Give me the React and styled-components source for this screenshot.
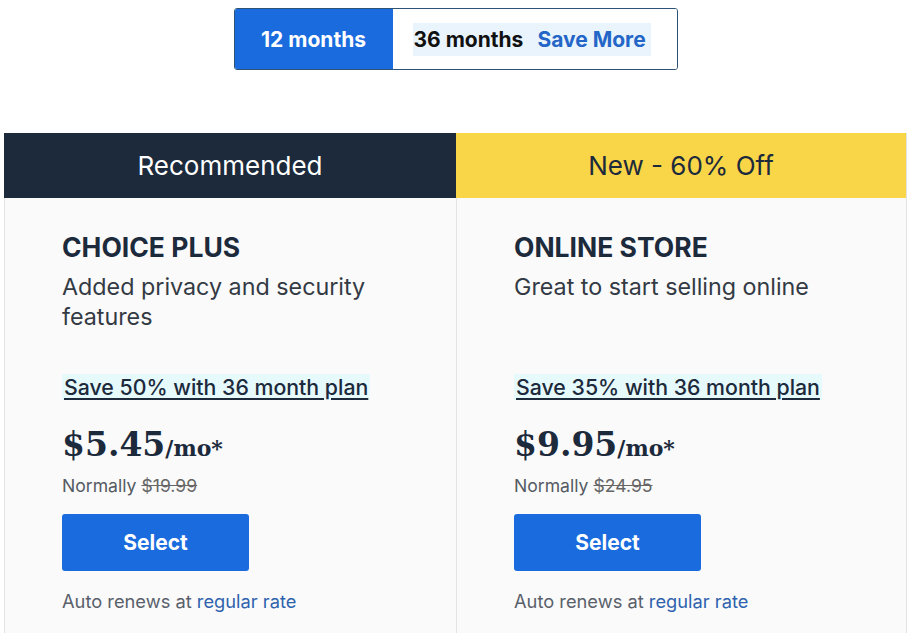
import React from 'react';
import styled, { createGlobalStyle } from 'styled-components';

const GlobalStyle = createGlobalStyle`
  body {
    margin: 0;
    background: #ffffff;
    font-family: Inter, "Noto Sans", sans-serif;
    color: #1c2a3c;
  }
`;

const Page = styled.div`
  width: 903px;
  padding: 8px 0 0 4px;
`;

const ToggleRow = styled.div`
  display: flex;
  justify-content: center;
  margin-bottom: 63px;
`;

const Toggle = styled.div`
  display: flex;
  height: 62px;
  border: 1px solid #2d5478;
  border-radius: 3px;
  overflow: hidden;
  box-sizing: border-box;
`;

const TermButton = styled.button`
  border: none;
  margin: 0;
  font-family: inherit;
  font-size: 21px;
  font-weight: 700;
  white-space: nowrap;
  display: flex;
  align-items: center;
  padding: 0 ${p => (p.$active ? '0' : '20px')};
  background: ${p => (p.$active ? '#196bde' : '#ffffff')};
  color: ${p => (p.$active ? '#ffffff' : '#111111')};
  width: ${p => (p.$active ? '158px' : '284px')};
  justify-content: ${p => (p.$active ? 'center' : 'flex-start')};
  cursor: pointer;
`;

const Highlight = styled.span`
  display: flex;
  flex-shrink: 0;
  align-items: center;
  gap: 14px;
  white-space: nowrap;
  background: #eaf4fd;
  padding: 4px 5px 4px 1px;
`;

const SaveMore = styled.span`
  color: #2466c8;
`;

const Cards = styled.div`
  display: grid;
  grid-template-columns: 452px 451px;
`;

const Card = styled.div`
  background: #fafafa;
  border-left: 1px solid #e3e3e3;
  border-right: ${p => (p.$last ? '1px solid #e3e3e3' : 'none')};
  min-height: 500px;
`;

const Banner = styled.div`
  height: 65px;
  display: flex;
  align-items: center;
  justify-content: center;
  font-size: 26px;
  font-weight: 400;
  background: ${p => p.$bg};
  color: ${p => p.$fg};
  margin-left: -1px;
`;

const Body = styled.div`
  padding: 34px 30px 0 57px;
`;

const PlanName = styled.h2`
  margin: 0;
  font-size: 26.5px;
  font-weight: 700;
  line-height: 30px;
  color: #1c2a3c;
`;

const Tagline = styled.p`
  margin: 10px 0 0;
  font-size: 23.3px;
  line-height: 29.5px;
  color: #333a44;
  min-height: 60px;
`;

const SaveLink = styled.a`
  display: block;
  width: fit-content;
  margin-top: 42px;
  padding: 2px 2px;
  background: #e6f9fb;
  color: #1c2a3c;
  font-size: 21.3px;
  font-weight: 500;
  line-height: 22px;
  text-decoration: underline;
  text-decoration-thickness: 2px;
  text-underline-offset: 3px;
`;

const Price = styled.div`
  margin-top: 23px;
  font-family: "DejaVu Serif", "Liberation Serif", serif;
  font-weight: 700;
  font-size: 33px;
  line-height: 44px;
  color: #1c2a3c;
`;

const PerMonth = styled.span`
  font-size: 22px;
`;

const Normally = styled.div`
  margin-top: 5px;
  font-size: 17.6px;
  line-height: 22px;
  color: #555b63;
  s {
    color: #666;
  }
`;

const SelectButton = styled.button`
  display: block;
  margin-top: 17px;
  width: 187px;
  height: 57px;
  border: none;
  border-radius: 3px;
  background: #196bde;
  color: #ffffff;
  font-family: inherit;
  font-size: 21px;
  font-weight: 700;
  cursor: pointer;
`;

const Renew = styled.div`
  margin-top: 19px;
  font-size: 18.3px;
  line-height: 22px;
  color: #59606b;
`;

const RateLink = styled.a`
  color: #2f62ad;
  text-decoration: none;
`;

const plans = [
  {
    banner: 'Recommended',
    bannerBg: '#1c2a3c',
    bannerFg: '#ffffff',
    name: 'CHOICE PLUS',
    tagline: 'Added privacy and security features',
    save: 'Save 50% with 36 month plan',
    price: '$5.45',
    normal: '$19.99',
  },
  {
    banner: 'New - 60% Off',
    bannerBg: '#f9d548',
    bannerFg: '#1c2a3c',
    name: 'ONLINE STORE',
    tagline: 'Great to start selling online',
    save: 'Save 35% with 36 month plan',
    price: '$9.95',
    normal: '$24.95',
  },
];

const App = () => {
  return (
    <Page>
      <GlobalStyle />
      <ToggleRow>
        <Toggle>
          <TermButton $active>12 months</TermButton>
          <TermButton>
            <Highlight>
              36 months <SaveMore>Save More</SaveMore>
            </Highlight>
          </TermButton>
        </Toggle>
      </ToggleRow>
      <Cards>
        {plans.map((plan, i) => (
          <Card key={plan.name} $last={i === plans.length - 1}>
            <Banner $bg={plan.bannerBg} $fg={plan.bannerFg}>{plan.banner}</Banner>
            <Body>
              <PlanName>{plan.name}</PlanName>
              <Tagline>{plan.tagline}</Tagline>
              <SaveLink href="#">{plan.save}</SaveLink>
              <Price>
                {plan.price}<PerMonth>/mo*</PerMonth>
              </Price>
              <Normally>
                Normally <s>{plan.normal}</s>
              </Normally>
              <SelectButton>Select</SelectButton>
              <Renew>
                Auto renews at <RateLink href="#">regular rate</RateLink>
              </Renew>
            </Body>
          </Card>
        ))}
      </Cards>
    </Page>
  );
};

export default App;
